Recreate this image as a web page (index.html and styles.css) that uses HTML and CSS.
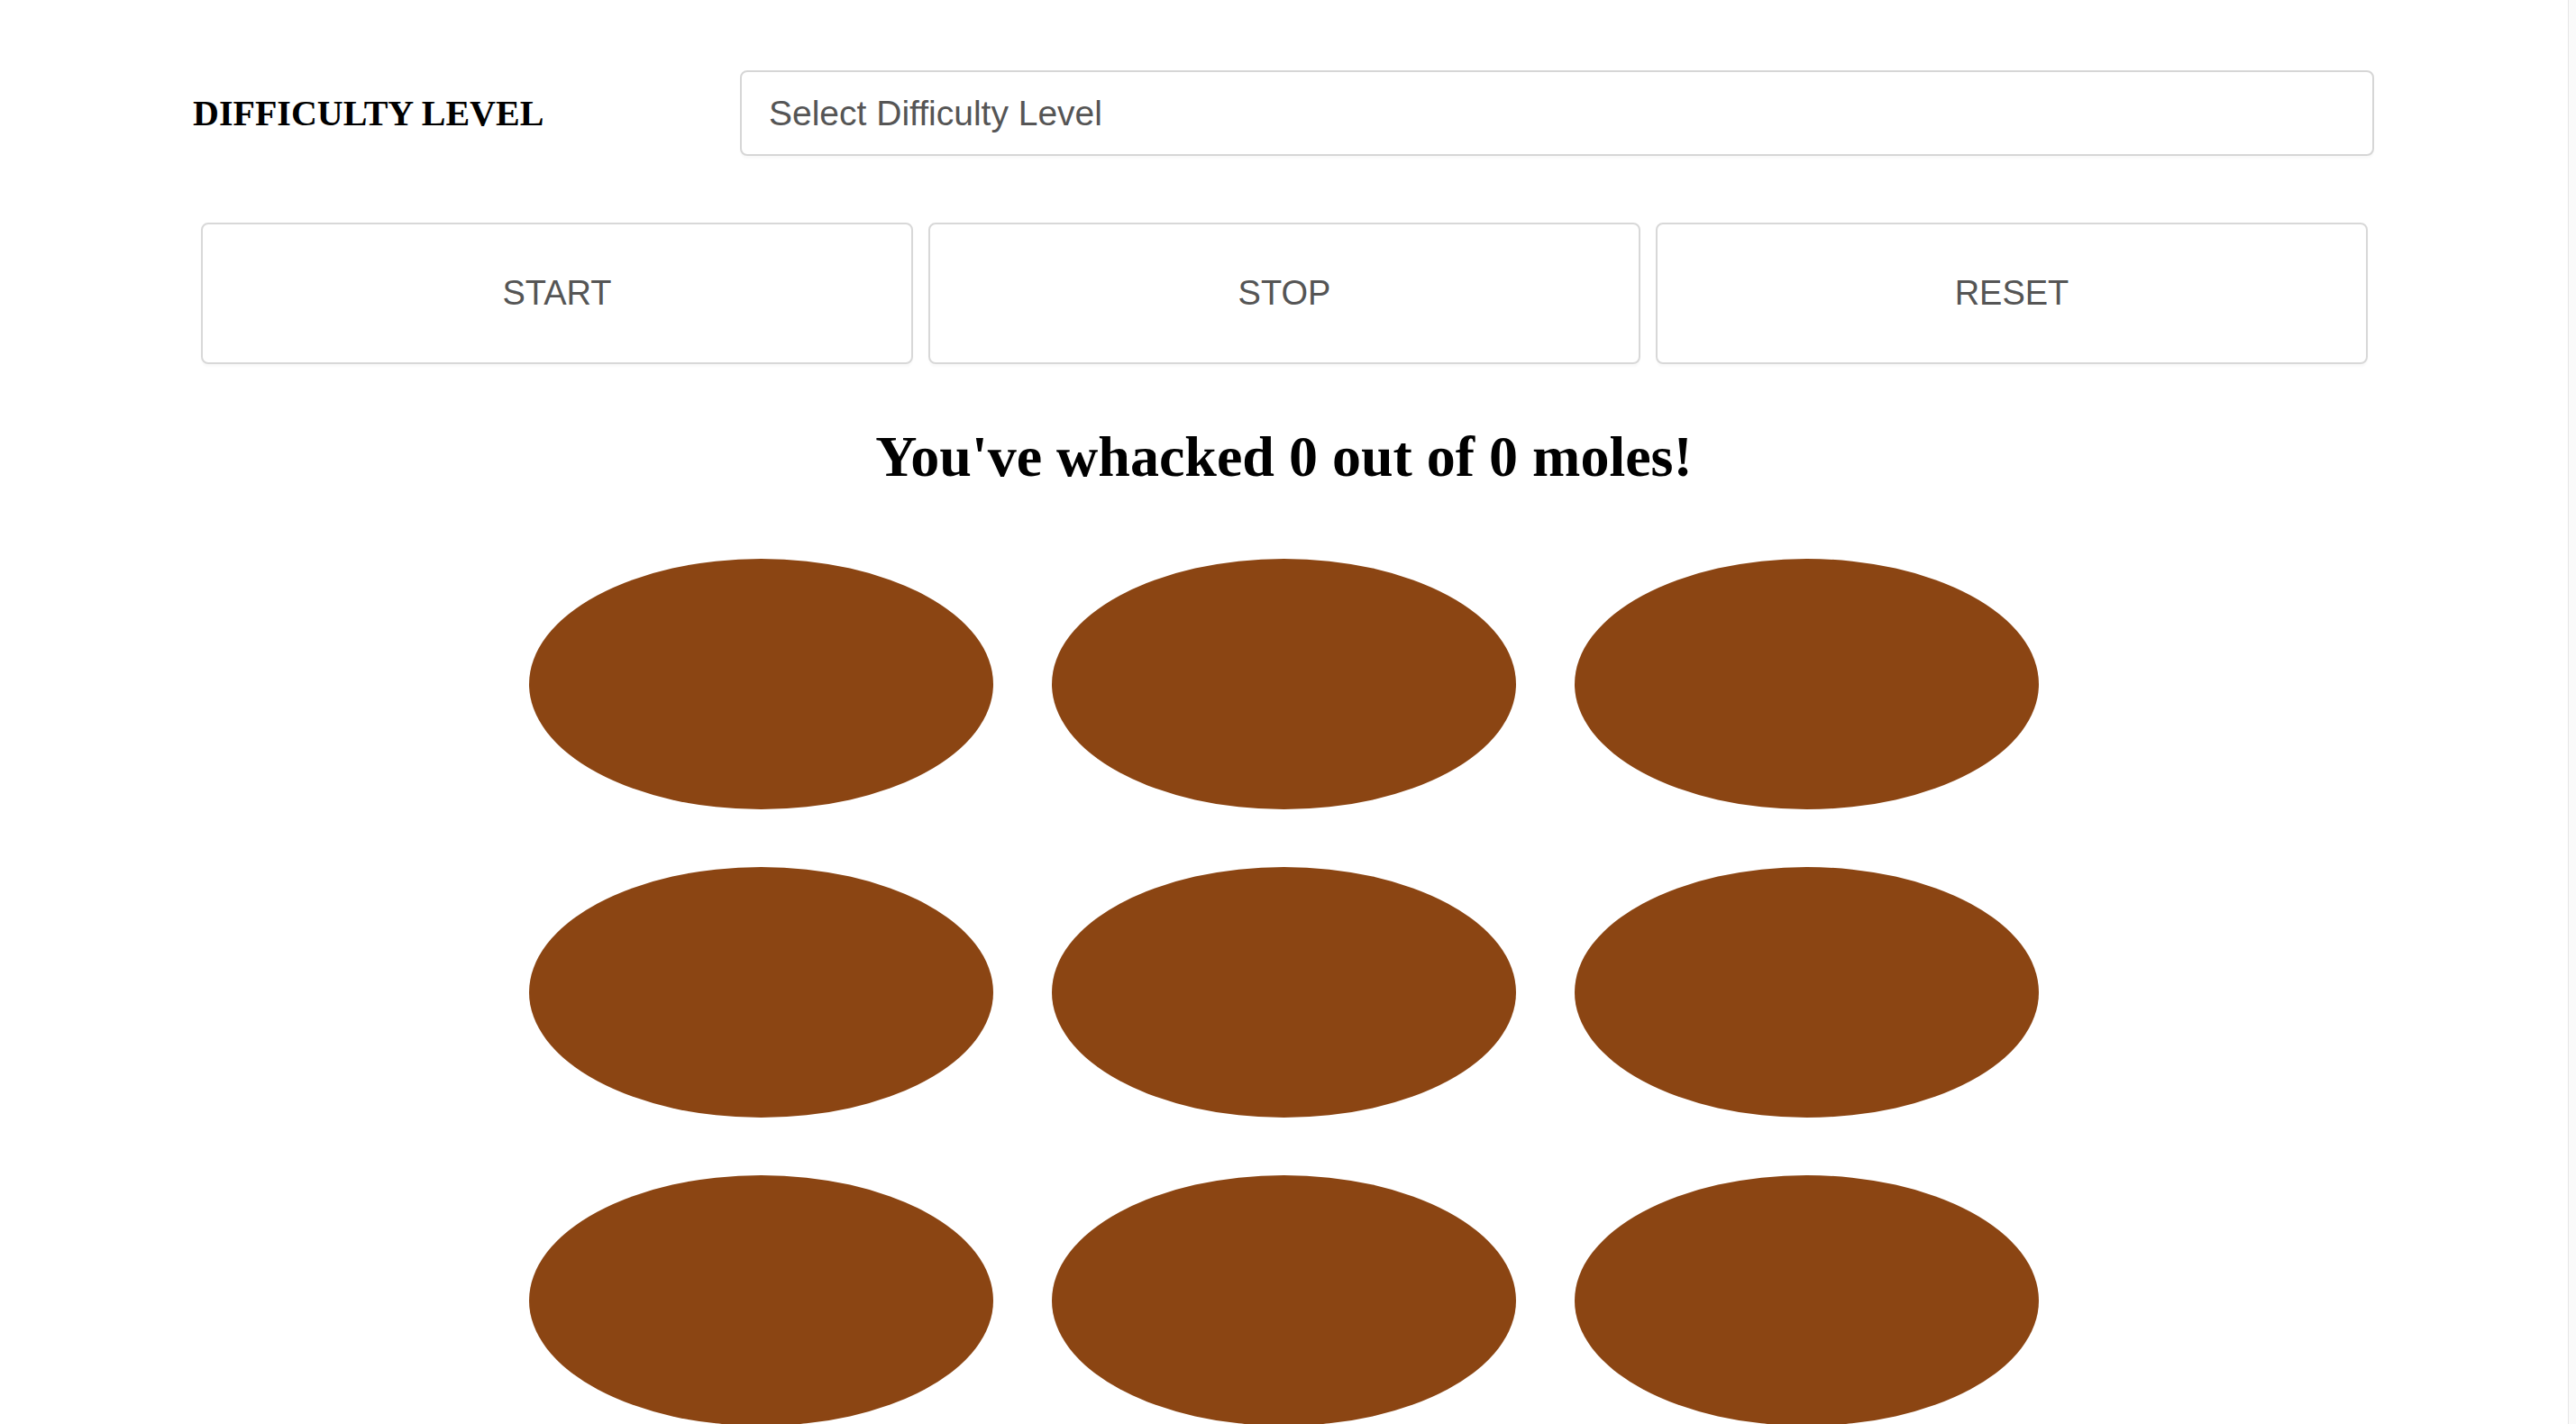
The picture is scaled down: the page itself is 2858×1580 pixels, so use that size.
FILE: index.html
```html
<!DOCTYPE html>
<html lang="en">
<head>
<meta charset="utf-8">
<title>Whack-a-Mole</title>
<link rel="stylesheet" href="styles.css">
</head>
<body>
<div class="window">
  <main class="page">
    <div class="difficulty">
      <label class="difficulty-label" for="level">DIFFICULTY LEVEL</label>
      <div class="select-box" id="level">Select Difficulty Level</div>
    </div>
    <div class="controls">
      <button class="btn">START</button>
      <button class="btn">STOP</button>
      <button class="btn">RESET</button>
    </div>
    <h1 class="score">You've whacked 0 out of 0 moles!</h1>
    <div class="board">
      <div class="hole"></div>
      <div class="hole"></div>
      <div class="hole"></div>
      <div class="hole"></div>
      <div class="hole"></div>
      <div class="hole"></div>
      <div class="hole"></div>
      <div class="hole"></div>
      <div class="hole"></div>
    </div>
  </main>
  <div class="scrollbar"></div>
</div>
</body>
</html>
```

FILE: styles.css
```css
html, body {
  margin: 0;
  padding: 0;
  background: #ffffff;
  height: 100%;
  overflow: hidden;
}

.window {
  display: flex;
  height: 1580px;
  overflow: hidden;
}

.page {
  flex: 1;
  min-width: 0;
}

.scrollbar {
  width: 8px;
  background: #fafafa;
  border-left: 1px solid #e6e6e6;
}

.difficulty {
  display: flex;
  align-items: center;
  margin: 78px 0 0 214px;
}

.difficulty-label {
  width: 607px;
  font-family: "Liberation Serif", "Times New Roman", serif;
  font-weight: bold;
  font-size: 40px;
  color: #000;
}

.select-box {
  box-sizing: border-box;
  width: 1813px;
  height: 95px;
  border: 2px solid #d6d6d6;
  border-radius: 8px;
  padding: 0 30px;
  display: flex;
  align-items: center;
  font-family: "Liberation Sans", Arial, sans-serif;
  font-size: 39px;
  color: #555555;
  background: #fff;
  box-shadow: 0 3px 2px rgba(0, 0, 0, 0.025);
}

.controls {
  display: grid;
  grid-template-columns: repeat(3, 790px);
  column-gap: 17px;
  margin: 74px 0 0 223px;
}

.btn {
  box-sizing: border-box;
  height: 157px;
  border: 2px solid #d8d8d8;
  border-radius: 8px;
  background: #fff;
  font-family: "Liberation Sans", Arial, sans-serif;
  font-size: 38px;
  color: #555555;
  padding: 0;
  box-shadow: 0 3px 2px rgba(0, 0, 0, 0.025);
}

.score {
  margin: 67px 0 0 0;
  text-align: center;
  font-family: "Liberation Serif", "Times New Roman", serif;
  font-weight: bold;
  font-size: 64px;
  line-height: 71px;
  color: #000;
}

.board {
  display: grid;
  grid-template-columns: repeat(3, 515px);
  grid-auto-rows: 278px;
  column-gap: 65px;
  row-gap: 64px;
  justify-content: center;
  margin-top: 78px;
}

.hole {
  background: #8b4513;
  border-radius: 50%;
}
```
